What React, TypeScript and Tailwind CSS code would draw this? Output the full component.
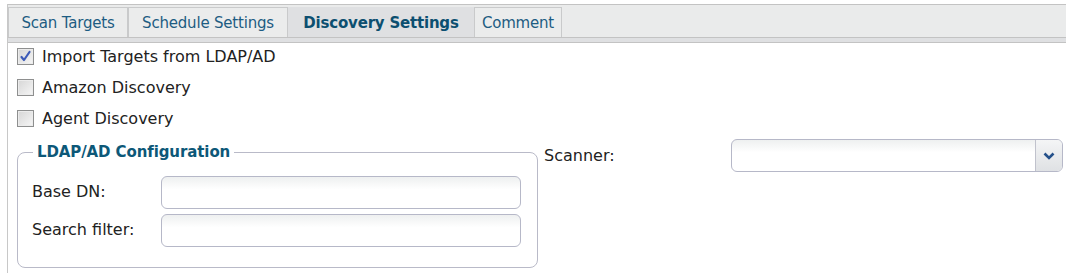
const tabs = [
  { label: "Scan Targets", w: "w-[120px]" },
  { label: "Schedule Settings", w: "w-[160px]" },
  { label: "Discovery Settings", w: "w-[186px]", active: true },
  { label: "Comment", w: "w-[88px]" },
]

const checks = [
  { label: "Import Targets from LDAP/AD", checked: true },
  { label: "Amazon Discovery", checked: false },
  { label: "Agent Discovery", checked: false },
]

function CheckBox({ checked }: { checked: boolean }) {
  return (
    <span className="flex h-[17px] w-[17px] items-center justify-center border border-[#8e8f8f] bg-gradient-to-br from-[#d6d6d6] to-[#f6f6f6] shadow-[inset_0_0_0_1px_#ececec]">
      {checked && (
        <svg width="13" height="13" viewBox="0 0 13 13">
          <path d="M2.5 7 L5 10 L10.5 2" fill="none" stroke="#3d5bb8" strokeWidth="2.2" strokeLinecap="round" strokeLinejoin="round" />
        </svg>
      )}
    </span>
  )
}

function TextInput() {
  return (
    <div className="h-[33px] w-[360px] rounded-[6px] border border-[#b6b8c8] bg-gradient-to-b from-[#eef0f0] to-white to-40%" />
  )
}

export default function App() {
  return (
    <div className="h-[273px] w-[1066px] overflow-hidden bg-white font-['DejaVu_Sans',sans-serif] text-[16px] text-[#222]">
      <div className="ml-[7px] mt-[4px] h-[269px] border-l border-[#c8c8c8]">
        {/* Tab strip */}
        <div className="border-y border-[#c3c3c3] bg-[#eaebeb]">
          <div className="flex h-[32px] items-end pt-[3px] text-[15px] tracking-[-0.2px]">
            {tabs.map((t) => (
              <div
                key={t.label}
                className={`flex h-[30px] items-center justify-center border border-b-0 pt-[1px] ${t.w} ${
                  t.active
                    ? "border-[#dfe0e2] bg-[#dfe0e2] font-bold text-[#0c4f70]"
                    : "border-[#c9cacb] bg-[#ebecec] text-[#1d5c82]"
                }`}
              >
                {t.label}
              </div>
            ))}
          </div>
          <div className="h-[5px] border-t border-[#c3c3c3] bg-[#dfe0e2]" />
        </div>

        <div className="flex flex-col gap-[10px] pl-[9px] pt-[3px]">
          {checks.map((c) => (
            <label key={c.label} className="flex h-[21px] items-center gap-[8px]">
              <CheckBox checked={c.checked} />
              <span>{c.label}</span>
            </label>
          ))}
        </div>

        <div className="flex items-start pl-[9px] pt-[10px]">
          <fieldset className="mt-[2px] h-[127px] w-[521px] rounded-[8px] border border-[#b9bac8] px-[14px]">
            <legend className="ml-[1px] px-[4px] text-[15px] font-bold tracking-[-0.1px] text-[#0d5878]">
              LDAP/AD Configuration
            </legend>
            <div className="mt-[12px] grid grid-cols-[129px_1fr] items-center gap-y-[5px]">
              <span>Base DN:</span>
              <TextInput />
              <span>Search filter:</span>
              <TextInput />
            </div>
          </fieldset>
          <div className="ml-[6px] flex items-center">
            <span className="w-[187px]">Scanner:</span>
            <div className="flex h-[33px] w-[332px] items-stretch overflow-hidden rounded-[6px] border border-[#b6b8c8] bg-gradient-to-b from-[#eef0f0] to-white to-40%">
              <div className="flex-1" />
              <div className="flex w-[27px] items-center justify-center border-l border-[#c0c2cc] bg-gradient-to-b from-[#f4f5f6] to-[#dfe1e4]">
                <svg width="12" height="8" viewBox="0 0 12 8">
                  <path d="M1.5 1.5 L6 6 L10.5 1.5" fill="none" stroke="#24508a" strokeWidth="2.6" />
                </svg>
              </div>
            </div>
          </div>
        </div>
      </div>
    </div>
  )
}
